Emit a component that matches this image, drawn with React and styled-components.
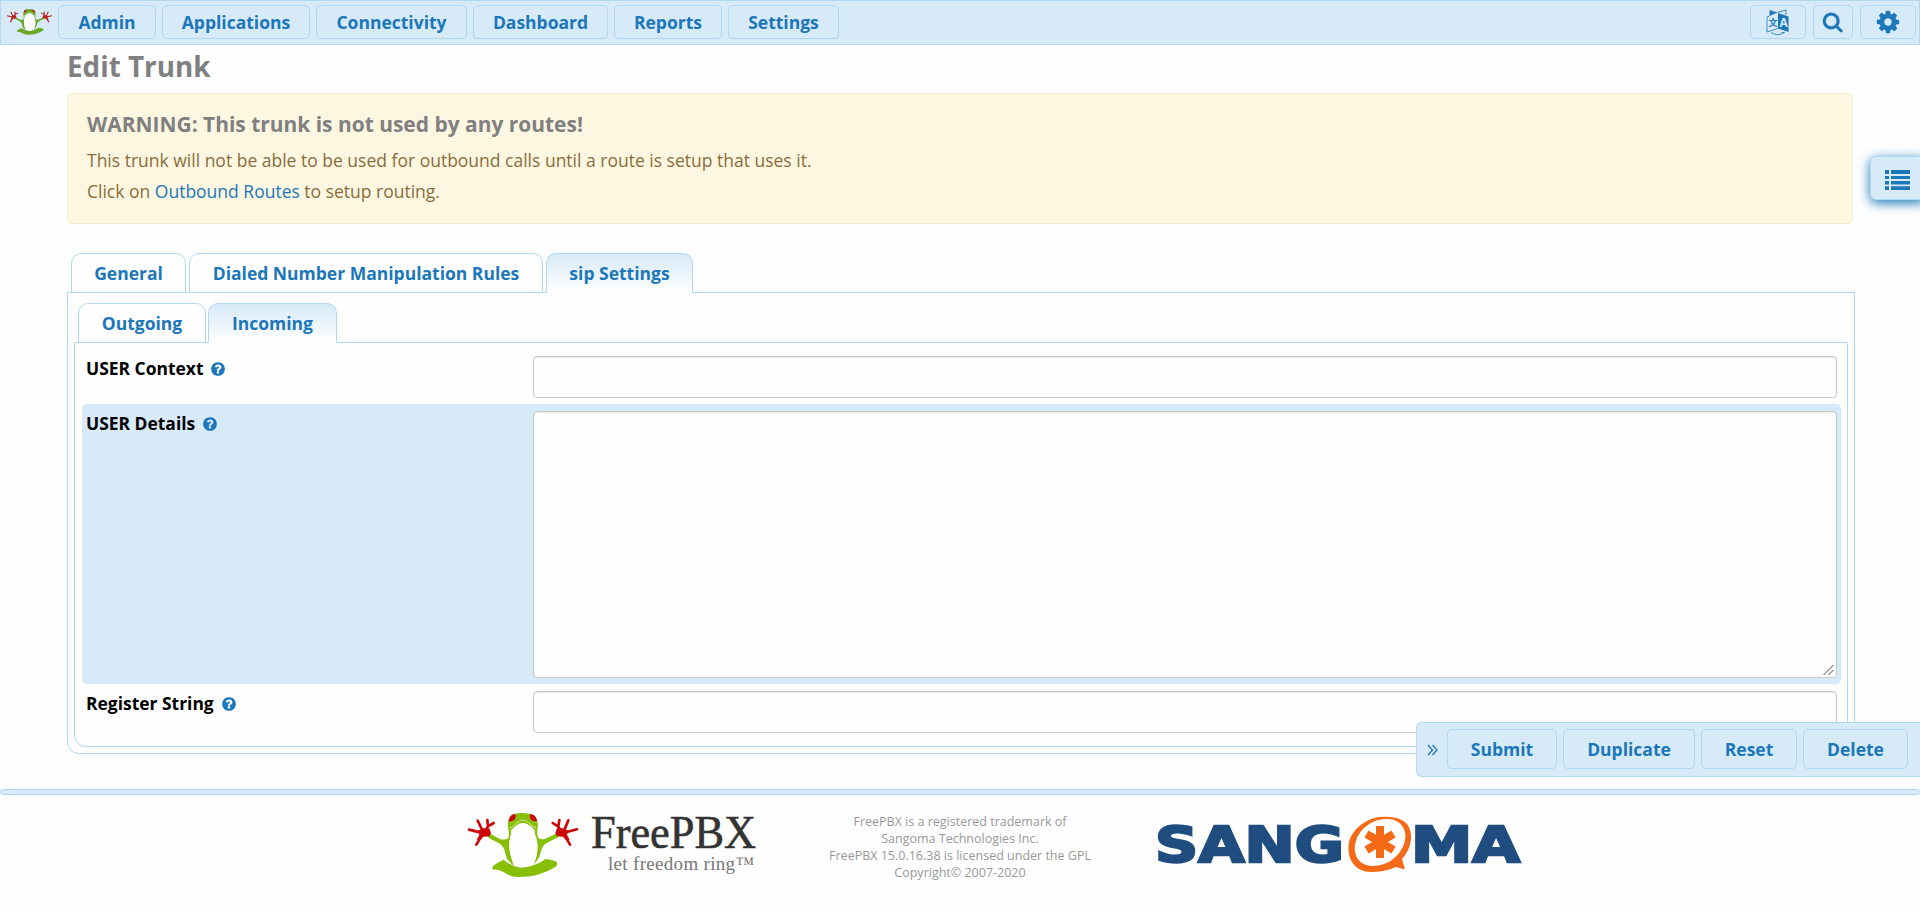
import React from "react";
import styled, { createGlobalStyle } from "styled-components";

const blue = "#1b77b9";
const pale = "#d7eaf8";
const line = "#b0d8f2";

const GlobalStyle = createGlobalStyle`
  * { box-sizing: border-box; }
  body {
    margin: 0;
    background: #fefefe;
    color: #000;
    font-family: "Open Sans", "Noto Sans", sans-serif;
    font-size: 17px;
    overflow-x: hidden;
  }
`;

const Page = styled.div`
  position: relative;
  width: 100%;
  height: 913px;
  overflow: hidden;
`;

const NavBar = styled.nav`
  display: flex;
  align-items: flex-start;
  height: 45px;
  padding: 4px 3px 0 6px;
  background: ${pale};
  border: 1px solid ${line};
`;

const NavLogo = styled.div`
  width: 51px;
  padding-top: 4px;
  line-height: 0;
`;

const NavMenu = styled.div`
  display: flex;
  gap: 6px;
`;

const NavTools = styled.div`
  display: flex;
  gap: 7px;
  margin-left: auto;
`;

const Button = styled.button`
  display: flex;
  align-items: center;
  justify-content: center;
  width: ${(p) => p.$width}px;
  height: ${(p) => p.$height || 34}px;
  padding: ${(p) => (p.$icon ? 0 : 2)}px 0 0;
  background: ${pale};
  border: 1px solid ${line};
  border-radius: 5px;
  color: ${blue};
  font: 700 17.5px/1 "Open Sans", sans-serif;
  white-space: nowrap;
`;

const Main = styled.main`
  padding: 0 65px 0 67px;
`;

const Title = styled.h1`
  margin: 0;
  height: 48px;
  color: #808080;
  font-size: 27.8px;
  font-weight: 700;
  line-height: 42px;
`;

const Warning = styled.section`
  width: 1786px;
  height: 131px;
  padding: 13px 19px;
  background: #fdf7e2;
  border: 1px solid #faebcc;
  border-radius: 5px;
  color: #8a6d3b;
`;

const WarningTitle = styled.h3`
  margin: 0 0 4px;
  color: #808080;
  font-size: 20.95px;
  font-weight: 700;
  line-height: 34px;
`;

const WarningText = styled.p`
  margin: 0;
  font-size: 17.5px;
  line-height: 31px;
`;

const Link = styled.a`
  color: ${blue};
`;

const Tabs = styled.div`
  display: flex;
  gap: ${(p) => p.$gap}px;
  padding-left: 4px;
  margin-bottom: -1px;
`;

const Tab = styled.div`
  display: flex;
  align-items: center;
  justify-content: center;
  width: ${(p) => p.$width}px;
  height: 40px;
  border: 1px solid ${line};
  border-bottom-color: ${(p) => (p.$active ? "#fefefe" : line)};
  border-radius: 10px 10px 0 0;
  background: ${(p) => (p.$active ? `linear-gradient(${pale}, #fefefe)` : "#fefefe")};
  color: ${blue};
  font-size: 17.5px;
  font-weight: 700;
  position: relative;
  white-space: nowrap;
`;

const OuterPanel = styled.section`
  width: 1788px;
  height: 462px;
  padding: 10px 6px 6px;
  border: 1px solid ${line};
  border-radius: 0 0 12px 12px;
`;

const InnerPanel = styled.section`
  height: 405px;
  padding: 7px 6px 0 7px;
  border: 1px solid ${line};
  border-radius: 0 0 12px 12px;
`;

const TabArea = styled.div`
  margin-top: 29px;
`;

const FormRow = styled.div`
  display: flex;
  height: ${(p) => p.$height}px;
  padding: ${(p) => p.$top}px 4px 0 4px;
  border-radius: 5px;
  background: ${(p) => (p.$tinted ? pale : "transparent")};
`;

const Label = styled.label`
  display: flex;
  align-items: center;
  gap: 7px;
  width: 447px;
  height: 24px;
  font-size: 17.45px;
  font-weight: 700;

  svg {
    margin-top: 2px;
  }
`;

const TextInput = styled.input`
  flex: 1;
  height: 42px;
  background: #fefefe;
  border: 1px solid #c8c8c8;
  border-radius: 4px;
  box-shadow: inset 0 1px 1px rgba(0, 0, 0, 0.075);
`;

const TextBoxWrap = styled.div`
  position: relative;
  display: flex;
  flex: 1;
  height: 267px;
`;

const TextBox = styled.textarea`
  flex: 1;
  background: #fefefe;
  border: 1px solid #c8c8c8;
  border-radius: 4px;
  box-shadow: inset 0 1px 1px rgba(0, 0, 0, 0.075);
  resize: none;
`;

const Grip = styled.svg`
  position: absolute;
  right: 2px;
  bottom: 2px;
`;

const SideTab = styled.div`
  position: absolute;
  top: 156px;
  right: -6px;
  width: 56px;
  height: 44px;
  padding: 13px 0 0 14px;
  background: ${pale};
  border: 1px solid ${line};
  border-radius: 6px;
  box-shadow: 0 3px 12px ${blue};
  line-height: 0;
`;

const ActionBar = styled.div`
  position: absolute;
  top: 722px;
  right: 0;
  display: flex;
  gap: 6px;
  width: 504px;
  height: 55px;
  padding: 6px 0 0 10px;
  background: ${pale};
  border: 1px solid ${line};
  border-right: 0;
  border-radius: 6px 0 0 6px;
`;

const Collapse = styled.div`
  display: flex;
  align-items: center;
  width: 14px;
  height: 42px;
`;

const Footer = styled.footer`
  margin-top: 35px;
`;

const FooterRule = styled.div`
  height: 6px;
  background: ${pale};
  border: 1px solid ${line};
  border-radius: 3px;
`;

const FooterContent = styled.div`
  display: flex;
  padding: 10px 0 0 460px;
`;

const Legal = styled.div`
  width: 280px;
  margin-left: 50px;
  padding-top: 8px;
  color: #999;
  font-size: 12.5px;
  line-height: 17px;
  text-align: center;
  white-space: nowrap;
`;

const Sangoma = styled.svg`
  margin-left: 39px;
`;

const FrogShapes = ({ green = "#86bf06", red = "#cc0505" }) => (
  <>
    <g fill={green}>
      <path d="M97 186 Q108 174 131 164 Q150 182 181 188 Q223 186 257 162 Q282 164 291 172 Q294 180 286 186 Q239 216 176 216 Q153 217 131 201 Q117 194 97 193 Z" />
      <path d="M145 74 L143 57 Q146 44 151 34 Q166 23 187 24 Q207 23 225 34 L234 57 L232 74 Z" />
      <path d="M86 83 L118 101 Q131 107 145 100 Q149 90 145 71 L154 74 Q155 88 151 98 Q144 130 152 151 Q156 168 161 182 Q141 168 137 149 Q133 122 115 113 Q98 106 82 95 Z" />
      <path d="M292 84 L256 101 Q245 106 235 99 Q229 88 233 71 L223 74 Q223 88 229 98 Q234 115 231 139 Q229 163 221 178 Q236 164 241 146 Q245 121 261 113 L296 96 Z" />
    </g>
    <path d="M154 76 Q164 63 177 56 Q189 51 202 57 Q216 65 224 76 Q223 88 228 98 Q236 123 230 152 Q221 184 190 187 Q162 184 153 154 Q144 121 151 95 Q155 84 154 76 Z" fill="#fefefe" />
    <path d="M149 70 Q163 64 171 53 Q189 38 206 53 Q214 64 228 69" fill="none" stroke="#fefefe" strokeWidth="2" />
    <path d="M145 49 Q150 27 165 27 Q170 36 163 44 Q155 51 145 49 Z M210 27 Q227 27 232 48 Q221 51 213 44 Q207 36 210 27 Z" fill={red} />
    <g fill="none" stroke={red} strokeWidth="8" strokeLinecap="round" strokeLinejoin="round">
      <path d="M27 74 L60 82 M53 47 L68 78 M101 54 L84 64 L74 80 M82 45 L84 64 M49 119 L58 104 L66 88" />
      <path d="M351 73 L318 82 M325 46 L312 78 M278 54 L295 65 L305 80 M298 45 L295 65 M330 119 L321 104 L312 88" />
    </g>
    <path d="M54 77 L70 70 L88 70 L93 84 L88 94 L70 95 L60 106 L50 104 L58 90 Z M325 77 L309 70 L291 70 L286 84 L291 94 L309 95 L319 106 L329 104 L321 90 Z" fill={red} />
  </>
);

const Frog = ({ width, height }) => (
  <svg width={width} height={height} viewBox="24 23 330 194" preserveAspectRatio="none">
    <FrogShapes green="#6aa824" red="#b8201c" />
  </svg>
);

const FreePbxLogo = () => (
  <svg width="310" height="80" viewBox="0 0 310 80">
    <g transform="scale(0.33333)">
      <FrogShapes />
    </g>
    <text x="131" y="42.5" fontFamily="Liberation Serif, serif" fontSize="46" fill="#333" stroke="#333" strokeWidth="0.6" textLength="165" lengthAdjust="spacingAndGlyphs">FreePBX</text>
    <text x="148" y="65" fontFamily="Liberation Serif, serif" fontSize="19" fill="#777" textLength="146" lengthAdjust="spacing">let freedom ring™</text>
  </svg>
);

const SangomaLogo = () => (
  <Sangoma width="400" height="80" viewBox="0 15 400 80">
    <g fill="#204d80" stroke="#204d80" strokeWidth="2.4" fontFamily="DejaVu Sans, sans-serif" fontWeight="700" fontSize="49">
      <text x="16" y="72.2" textLength="189" lengthAdjust="spacingAndGlyphs">SANG</text>
      <text x="272" y="72.2" textLength="109" lengthAdjust="spacingAndGlyphs">MA</text>
    </g>
    <path fillRule="evenodd" fill="#f56a17" d="M240 27 C226 29 213 40 210 52 C207 70 217 82 232 82 Q246 82 257 77 L266 79.5 L263 69 C273 58 275 43 268 34 Q260 25 240 27 Z M247 29 C262 28 270 41 265 54 C258 72 243 76 233 76 C219 75 213 64 217 51 C221 38 234 29 247 29 Z" />
    <path d="M241 36 V68 M227.5 44 L254.5 60 M254.5 44 L227.5 60" stroke="#f56a17" strokeWidth="8" />
  </Sangoma>
);

const LanguageIcon = () => (
  <svg width="24" height="27" viewBox="0 0 24 27">
    <path d="M3.5 1 L11.5 3.5 L3.5 7 Z M12 4 L22.5 7.5 V23 L12 19.5 Z" fill={blue} />
    <path d="M3.5 7 L1 8 V23 L12 19.5 M11.5 3.5 L20 1 V6 M5 23.5 Q12 28 18.5 23.5 M15.5 23.5 H18.5" fill="none" stroke={blue} strokeWidth="0.8" />
    <text x="2.5" y="17" fontSize="9" fill={blue} fontFamily="Noto Sans CJK SC, sans-serif">文</text>
    <text x="13.4" y="18" fontSize="12" fontWeight="700" fill={pale} fontFamily="Open Sans, sans-serif">A</text>
  </svg>
);

const SearchIcon = () => (
  <svg width="21.5" height="21.5" viewBox="0 0 1792 1792" fill={blue}>
    <path d="M1216 832q0-185-131.5-316.5t-316.5-131.5-316.5 131.5-131.5 316.5 131.5 316.5 316.5 131.5 316.5-131.5 131.5-316.5zm512 832q0 52-38 90t-90 38q-54 0-90-38l-343-342q-179 124-399 124-143 0-273.5-55.5t-225-150-150-225-55.5-273.5 55.5-273.5 150-225 225-150 273.5-55.5 273.5 55.5 225 150 150 225 55.5 273.5q0 220-124 399l343 343q37 37 37 90z" />
  </svg>
);

const CogIcon = () => (
  <svg width="26" height="26" viewBox="0 0 1792 1792" fill={blue}>
    <path d="M1152 896q0-106-75-181t-181-75-181 75-75 181 75 181 181 75 181-75 75-181zm512-109v222q0 12-8 23t-20 13l-185 28q-19 54-39 91 35 50 107 138 10 12 10 25t-9 23q-27 37-99 108t-94 71q-12 0-26-9l-138-108q-44 23-91 38-16 136-29 186-7 28-36 28h-222q-14 0-24.5-8.5t-11.5-21.5l-28-184q-49-16-90-37l-141 107q-10 9-25 9-14 0-25-11-126-114-165-168-7-10-7-23 0-12 8-23 15-21 51-66.5t54-70.5q-27-50-41-99l-183-27q-13-2-21-12.5t-8-23.5v-222q0-12 8-23t19-13l186-28q14-46 39-92-40-57-107-138-10-12-10-24 0-10 9-23 26-36 98.5-107.5t94.5-71.5q13 0 26 10l138 107q44-23 91-38 16-136 29-186 7-28 36-28h222q14 0 24.5 8.5t11.5 21.5l28 184q49 16 90 37l142-107q9-9 24-9 13 0 25 10 129 119 165 170 7 8 7 22 0 12-8 23-15 21-51 66.5t-54 70.5q26 50 41 98l183 28q13 2 21 12.5t8 23.5z" />
  </svg>
);

const HelpIcon = () => (
  <svg width="16" height="16" viewBox="0 0 1792 1792" fill={blue}>
    <path d="M1024 1376v-192q0-14-9-23t-23-9h-192q-14 0-23 9t-9 23v192q0 14 9 23t23 9h192q14 0 23-9t9-23zm256-672q0-88-55.5-163t-138.5-116-170-41q-243 0-371 213-15 24 8 42l132 100q7 6 19 6 16 0 25-12 53-68 86-92 34-24 86-24 48 0 85.5 26t37.5 59q0 38-20 61t-68 45q-63 28-115.5 86.5t-52.5 125.5v36q0 14 9 23t23 9h192q14 0 23-9t9-23q0-19 21.5-49.5t54.5-49.5q32-18 49-28.5t46-35 44.5-48 28-60.5 12.5-81zm384 192q0 209-103 385.5t-279.5 279.5-385.5 103-385.5-103-279.5-279.5-103-385.5 103-385.5 279.5-279.5 385.5-103 385.5 103 279.5 279.5 103 385.5z" />
  </svg>
);

const ListIcon = () => (
  <svg width="25" height="20" viewBox="0 0 25 20" fill={blue}>
    <path d="M0 0h4v4H0z M6 0h19v4H6z M0 6h4v3H0z M6 6h19v3H6z M0 11h4v3.5H0z M6 11h19v3.5H6z M0 16.3h4V20H0z M6 16.3h19V20H6z" />
  </svg>
);

const menu = [
  ["Admin", 98],
  ["Applications", 148],
  ["Connectivity", 151],
  ["Dashboard", 135],
  ["Reports", 108],
  ["Settings", 111],
];

const actions = [
  ["Submit", 110],
  ["Duplicate", 132],
  ["Reset", 96],
  ["Delete", 105],
];

export default function App() {
  return (
    <Page>
      <GlobalStyle />
      <NavBar>
        <NavLogo><Frog width={45} height={26} /></NavLogo>
        <NavMenu>
          {menu.map(([name, width]) => <Button key={name} $width={width}>{name}</Button>)}
        </NavMenu>
        <NavTools>
          <Button $width={56} $icon aria-label="Language"><LanguageIcon /></Button>
          <Button $width={40} $icon aria-label="Search"><SearchIcon /></Button>
          <Button $width={56} $icon aria-label="Options"><CogIcon /></Button>
        </NavTools>
      </NavBar>
      <Main>
        <Title>Edit Trunk</Title>
        <Warning>
          <WarningTitle>WARNING: This trunk is not used by any routes!</WarningTitle>
          <WarningText>This trunk will not be able to be used for outbound calls until a route is setup that uses it.</WarningText>
          <WarningText>Click on <Link>Outbound Routes</Link> to setup routing.</WarningText>
        </Warning>
        <TabArea>
          <Tabs $gap={3}>
            <Tab $width={115}>General</Tab>
            <Tab $width={354}>Dialed Number Manipulation Rules</Tab>
            <Tab $width={147} $active>sip Settings</Tab>
          </Tabs>
          <OuterPanel>
            <Tabs $gap={2}>
              <Tab $width={128}>Outgoing</Tab>
              <Tab $width={129} $active>Incoming</Tab>
            </Tabs>
            <InnerPanel>
              <FormRow $height={54} $top={6}>
                <Label>USER Context <HelpIcon /></Label>
                <TextInput />
              </FormRow>
              <FormRow $height={280} $top={7} $tinted>
                <Label>USER Details <HelpIcon /></Label>
                <TextBoxWrap>
                  <TextBox />
                  <Grip width="12" height="12" viewBox="0 0 12 12" fill="none" stroke="#444" strokeWidth="1">
                    <path d="M0.5 11 L10.5 1 M5.5 11 L10.5 6" />
                  </Grip>
                </TextBoxWrap>
              </FormRow>
              <FormRow $height={54} $top={7}>
                <Label>Register String <HelpIcon /></Label>
                <TextInput />
              </FormRow>
            </InnerPanel>
          </OuterPanel>
        </TabArea>
      </Main>
      <Footer>
        <FooterRule />
        <FooterContent>
          <FreePbxLogo />
          <Legal>
            FreePBX is a registered trademark of<br />
            Sangoma Technologies Inc.<br />
            FreePBX 15.0.16.38 is licensed under the GPL<br />
            Copyright© 2007-2020
          </Legal>
          <SangomaLogo />
        </FooterContent>
      </Footer>
      <SideTab><ListIcon /></SideTab>
      <ActionBar>
        <Collapse>
          <svg width="11" height="12" viewBox="0 0 11 12" fill="none" stroke={blue} strokeWidth="1.3">
            <path d="M1 1l4.5 5L1 11M5.5 1L10 6l-4.5 5" />
          </svg>
        </Collapse>
        {actions.map(([name, width]) => <Button key={name} $width={width} $height={40}>{name}</Button>)}
      </ActionBar>
    </Page>
  );
}
